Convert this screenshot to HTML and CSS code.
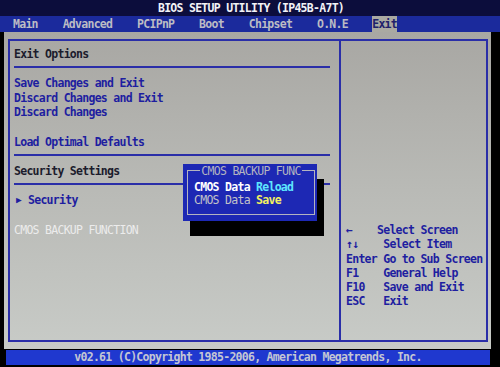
FILE: index.html
```html
<!DOCTYPE html>
<html lang="en">
<head>
    <meta charset="UTF-8">
    <meta name="viewport" content="width=device-width, initial-scale=1.0">
    <title>BIOS Setup Utility</title>
    <link rel="stylesheet" href="styles.css">
</head>
<body>
    <div class="bios">
        <div class="titlebar">BIOS SETUP UTILITY (IP45B-A7T)</div>

        <nav class="menubar">
            <span>Main</span>
            <span>Advanced</span>
            <span>PCIPnP</span>
            <span>Boot</span>
            <span>Chipset</span>
            <span>O.N.E</span>
            <span class="active">Exit</span>
        </nav>

        <div class="panel">
            <div class="frame">
                <div class="options">
                    <div class="row heading">Exit Options</div>
                    <div class="rule"></div>
                    <div class="row item">Save Changes and Exit</div>
                    <div class="row item">Discard Changes and Exit</div>
                    <div class="row item">Discard Changes</div>
                    <div class="row"></div>
                    <div class="row item">Load Optimal Defaults</div>
                    <div class="rule"></div>
                    <div class="row heading">Security Settings</div>
                    <div class="rule"></div>
                    <div class="row item"><span class="arrow">&#9654;</span>Security</div>
                    <div class="row"></div>
                    <div class="row selected">CMOS BACKUP FUNCTION</div>

                    <div class="popup">
                        <div class="popup-box">
                            <div class="popup-title">CMOS BACKUP FUNC</div>
                            <div class="popup-row current">CMOS Data <span class="reload">Reload</span></div>
                            <div class="popup-row">CMOS Data <span class="save">Save</span></div>
                        </div>
                    </div>
                </div>

                <div class="help">
                    <div class="help-row"><span class="key short">&#8592;</span>Select Screen</div>
                    <div class="help-row"><span class="key">&#8593;&#8595;</span>Select Item</div>
                    <div class="help-row"><span class="key">Enter</span>Go to Sub Screen</div>
                    <div class="help-row"><span class="key">F1</span>General Help</div>
                    <div class="help-row"><span class="key">F10</span>Save and Exit</div>
                    <div class="help-row"><span class="key">ESC</span>Exit</div>
                </div>
            </div>
        </div>

        <div class="footer">v02.61 (C)Copyright 1985-2006, American Megatrends, Inc.</div>
    </div>
</body>
</html>
```

FILE: styles.css
```css
:root {
    --navy: #0c0d3c;
    --menu-blue: #1b2a9c;
    --line-blue: #2a2ea8;
    --text-blue: #1e1ea0;
    --footer-blue: #1f38cf;
    --light-grey: #bcbcc4;
}

* {
    margin: 0;
    padding: 0;
    box-sizing: border-box;
}

body {
    background-color: #000;
    overflow: hidden;
}

.bios {
    width: 500px;
    height: 367px;
    font-family: 'DejaVu Sans Mono', 'Liberation Mono', monospace;
    font-weight: bold;
    font-size: 11.5px;
    letter-spacing: -0.72px;
    white-space: nowrap;
}

.titlebar {
    height: 16px;
    line-height: 16px;
    background-color: var(--navy);
    color: #f2f2f6;
    text-align: center;
    padding-left: 2px;
}

.menubar {
    height: 16px;
    display: flex;
    align-items: center;
    gap: 24.8px;
    padding-left: 13px;
    background-color: var(--menu-blue);
    color: var(--light-grey);
}

.menubar span {
    line-height: 16px;
}

.menubar .active {
    background-color: #aaa9a2;
    color: #20206a;
    margin-left: -0.6px;
}

.panel {
    height: 317px;
    margin: 0 9px 0 4px;
    padding: 7px 3px 7px 4px;
    background: linear-gradient(180deg, #a8a7a3 0%, #b9bab6 50%, #c8cbc7 100%);
}

.frame {
    height: 100%;
    display: flex;
    border: 2px solid var(--line-blue);
}

.options {
    position: relative;
    width: 331px;
    padding: 3.6px 0 0 4px;
    border-right: 2px solid var(--line-blue);
}

/* text sits ~2px lower than the row centre, like the BIOS font */
.row {
    height: 14.7px;
    padding-top: 2px;
    line-height: 14.7px;
}

.heading {
    color: #1c1c2c;
}

.item {
    color: var(--text-blue);
}

.selected {
    color: #ececec;
    font-weight: normal;
}

.arrow {
    display: inline-block;
    width: 14px;
    padding-left: 2px;
    font-size: 9.5px;
    vertical-align: top;
}

.rule {
    margin: 6.35px 9px 6.35px 0;
    border-top: 2px solid var(--line-blue);
}

.popup {
    position: absolute;
    left: 173px;
    top: 123px;
    width: 134px;
    height: 57px;
    padding: 6px 2px 6px 4px;
    background-color: #1d28b4;
    box-shadow: 7px 15px 0 #000;
}

.popup-box {
    position: relative;
    height: 100%;
    padding: 9.5px 0 0 6px;
    border: 1px solid #b4b4c0;
}

.popup-title {
    position: absolute;
    top: -7.5px;
    left: 0;
    right: 0;
    margin: 0 auto;
    width: max-content;
    padding: 0 1px;
    line-height: 14px;
    background-color: #1d28b4;
    color: #b4b4c0;
    font-weight: normal;
}

.popup-row {
    height: 13.4px;
    line-height: 13.4px;
    color: #c2c2c8;
    font-weight: normal;
}

.popup-row.current {
    color: #fff;
    font-weight: bold;
}

.reload {
    color: #5ee6ff;
    font-weight: bold;
}

.save {
    color: #f4f060;
    font-weight: bold;
}

.help {
    flex: 1;
    padding: 182px 0 0 5px;
    color: var(--text-blue);
}

.help-row {
    height: 14.3px;
    line-height: 14.3px;
}

.key {
    display: inline-block;
    width: 37.2px;
}

.key.short {
    width: 31px;
}

.footer {
    height: 15px;
    line-height: 15px;
    width: 484px;
    margin: 1px 0 0 6px;
    background-color: var(--footer-blue);
    color: #c4c6d4;
    text-align: center;
}
```
